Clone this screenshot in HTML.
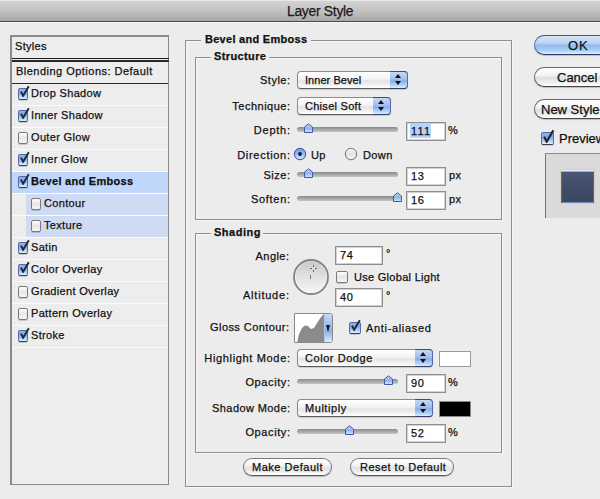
<!DOCTYPE html>
<html><head><meta charset="utf-8">
<style>
*{box-sizing:border-box;margin:0;padding:0}
html,body{width:600px;height:499px;overflow:hidden;background:#ececec;font-family:"Liberation Sans",sans-serif;color:#111}
.a{position:absolute}
.t{position:absolute;font-size:11px;line-height:14px;white-space:nowrap;color:#111;-webkit-text-stroke:0.25px #111}
.r{text-align:right}
#title{position:absolute;left:0;top:0;width:600px;height:22px;background:linear-gradient(#e6e6e6 0,#e6e6e6 1px,#d3d3d3 1px,#c2c2c2 50%,#a8a8a8);border-bottom:1px solid #4a4a4a;box-shadow:0 1px 0 #f8f8f8}
#title span{position:absolute;left:287px;top:4px;font-size:13.8px;line-height:16px;color:#1a1a1a;letter-spacing:-.25px;-webkit-text-stroke:0.25px #1a1a1a}
.box{position:absolute;border:1px solid #8e8e8e;box-shadow:1px 1px 0 #f6f6f6, inset 1px 1px 0 #f6f6f6}
.gbg{position:absolute;height:4px;background:#ececec}
#list{position:absolute;left:10px;top:35px;width:159px;height:450px;background:#ededed;border-left:2px solid #8a8a8a;border-top:2px solid #8a8a8a;border-right:1px solid #8a8a8a;border-bottom:1px solid #8a8a8a}
.row{position:absolute;left:12px;width:156px;height:22px;border-bottom:1px solid #fbfbfb}
.cb{position:absolute;width:10px;height:12px;border-radius:2px;border:1px solid #7a7a7a;background:linear-gradient(#fdfdfd,#e6e6e6 50%,#f6f6f6);box-shadow:0 1px 0 rgba(0,0,0,.15)}
.cb.on{border-color:#5468b0 #5a6aa8 #3d3d5a;background:linear-gradient(#8fb0e6,#86abe6 40%,#a8cdf6 70%,#d8f2ff)}
.cb.on svg{position:absolute;left:1px;top:-4px}
.pop{position:absolute;height:18px;border:1px solid #8a8a8a;border-bottom-color:#5a5a5a;border-radius:4px;background:linear-gradient(#ffffff,#f3f3f3 45%,#e3e3e3 55%,#f4f4f4 85%,#ffffff);box-shadow:0 1px 1px rgba(0,0,0,.15)}
.pop .blue{position:absolute;right:-1px;top:-1px;width:18px;height:18px;border-radius:0 4px 4px 0;border:1px solid #3848a0;border-left:none;border-right-color:#5868b0;border-bottom-color:#3a3a6a;background:linear-gradient(#c6d8f4,#a3c0ec 45%,#86aee6 55%,#b3d7fa 85%,#d9f2ff)}
.pop .blue:before{content:"";position:absolute;left:5px;top:2px;border-left:3px solid transparent;border-right:3px solid transparent;border-bottom:4px solid #111}
.pop .blue:after{content:"";position:absolute;left:5px;top:9px;border-left:3px solid transparent;border-right:3px solid transparent;border-top:4px solid #111}
.track{position:absolute;height:5px;border-radius:3px;background:linear-gradient(#8a8a8a,#a8a8a8 50%,#c4c4c4)}
.thumb{position:absolute;width:11px;height:12px}
.inp{position:absolute;width:40px;height:19px;background:#fff;border:1px solid #8e8e8e;box-shadow:inset 0 0 0 1px #d2d2d2}
.radio{position:absolute;width:12px;height:12px;border-radius:50%;border:1px solid #7a7a7a;background:linear-gradient(#f8f8f8,#e0e0e0 50%,#f6f6f6)}
.radio.on{border-color:#3a4c9a;background:radial-gradient(circle at 50% 50%,#1a1a2a 0,#1a1a2a 1.6px,rgba(26,26,42,.5) 2.2px,transparent 2.8px),linear-gradient(#a9c3ee,#86aee9 50%,#c0e0ff)}
.btn{position:absolute;height:18px;border-radius:9px;border:1px solid #7a7a7a;border-bottom-color:#555;background:linear-gradient(#ffffff,#f4f4f4 40%,#e2e2e2 55%,#f2f2f2 85%,#ffffff);box-shadow:0 1px 1px rgba(0,0,0,.2)}
.bigbtn{position:absolute;height:20px;border-radius:10px;border:1px solid #6a6a6a;border-bottom-color:#444;background:linear-gradient(#ffffff,#f3f3f3 40%,#dedede 55%,#f2f2f2 85%,#ffffff);box-shadow:0 1px 1px rgba(0,0,0,.2)}
.t13{position:absolute;font-size:13px;line-height:15px;white-space:nowrap;color:#111;-webkit-text-stroke:0.25px #111}
</style></head><body>
<div id="title"><span>Layer Style</span></div>
<div id="list"></div>
<div class="a" style="left:12px;top:58px;width:157px;height:1px;background:#1c1c1c"></div>
<div class="a" style="left:12px;top:60px;width:157px;height:2px;background:#2a2a2a"></div>
<div class="a" style="left:12px;top:83px;width:156px;height:1px;background:#2a2a2a"></div>
<div class="t" style="left:15px;top:39px;letter-spacing:0.3px;">Styles</div>
<div class="t" style="left:16px;top:64px;letter-spacing:0.48px;">Blending Options: Default</div>
<div class="row" style="top:84px;"></div>
<span class="cb on" style="left:18px;top:88px"><svg width="11" height="12" viewBox="0 0 11 12"><path d="M0.9 6.6 L3.1 10.8 L8.8 1.2" fill="none" stroke="#232733" stroke-width="1.9"/></svg></span>
<div class="t" style="left:31px;top:86px;letter-spacing:0.33px;">Drop Shadow</div>
<div class="row" style="top:106px;"></div>
<span class="cb on" style="left:18px;top:110px"><svg width="11" height="12" viewBox="0 0 11 12"><path d="M0.9 6.6 L3.1 10.8 L8.8 1.2" fill="none" stroke="#232733" stroke-width="1.9"/></svg></span>
<div class="t" style="left:31px;top:108px;letter-spacing:0.33px;">Inner Shadow</div>
<div class="row" style="top:128px;"></div>
<span class="cb" style="left:18px;top:132px"></span>
<div class="t" style="left:31px;top:130px;letter-spacing:0.33px;">Outer Glow</div>
<div class="row" style="top:150px;"></div>
<span class="cb on" style="left:18px;top:154px"><svg width="11" height="12" viewBox="0 0 11 12"><path d="M0.9 6.6 L3.1 10.8 L8.8 1.2" fill="none" stroke="#232733" stroke-width="1.9"/></svg></span>
<div class="t" style="left:31px;top:152px;letter-spacing:0.33px;">Inner Glow</div>
<div class="row" style="top:172px;background:#c0d6fa;"></div>
<span class="cb on" style="left:18px;top:176px"><svg width="11" height="12" viewBox="0 0 11 12"><path d="M0.9 6.6 L3.1 10.8 L8.8 1.2" fill="none" stroke="#232733" stroke-width="1.9"/></svg></span>
<div class="t" style="left:31px;top:174px;letter-spacing:0.28px;font-weight:bold">Bevel and Emboss</div>
<div class="row" style="top:194px;background:linear-gradient(90deg,#ededed 14px,#cedbf2 14px);"></div>
<span class="cb" style="left:31px;top:198px"></span>
<div class="t" style="left:44px;top:196px;letter-spacing:0.33px;">Contour</div>
<div class="row" style="top:216px;background:linear-gradient(90deg,#ededed 14px,#cedbf2 14px);"></div>
<span class="cb" style="left:31px;top:220px"></span>
<div class="t" style="left:44px;top:218px;letter-spacing:0.33px;">Texture</div>
<div class="row" style="top:238px;"></div>
<span class="cb on" style="left:18px;top:242px"><svg width="11" height="12" viewBox="0 0 11 12"><path d="M0.9 6.6 L3.1 10.8 L8.8 1.2" fill="none" stroke="#232733" stroke-width="1.9"/></svg></span>
<div class="t" style="left:31px;top:240px;letter-spacing:0.33px;">Satin</div>
<div class="row" style="top:260px;"></div>
<span class="cb on" style="left:18px;top:264px"><svg width="11" height="12" viewBox="0 0 11 12"><path d="M0.9 6.6 L3.1 10.8 L8.8 1.2" fill="none" stroke="#232733" stroke-width="1.9"/></svg></span>
<div class="t" style="left:31px;top:262px;letter-spacing:0.33px;">Color Overlay</div>
<div class="row" style="top:282px;"></div>
<span class="cb" style="left:18px;top:286px"></span>
<div class="t" style="left:31px;top:284px;letter-spacing:0.33px;">Gradient Overlay</div>
<div class="row" style="top:304px;"></div>
<span class="cb" style="left:18px;top:308px"></span>
<div class="t" style="left:31px;top:306px;letter-spacing:0.33px;">Pattern Overlay</div>
<div class="row" style="top:326px;"></div>
<span class="cb on" style="left:18px;top:330px"><svg width="11" height="12" viewBox="0 0 11 12"><path d="M0.9 6.6 L3.1 10.8 L8.8 1.2" fill="none" stroke="#232733" stroke-width="1.9"/></svg></span>
<div class="t" style="left:31px;top:328px;letter-spacing:0.33px;">Stroke</div>
<div class="box" style="left:185px;top:40px;width:327px;height:447px"></div>
<div class="gbg" style="left:201px;top:38px;width:110px;height:6px"></div>
<div class="t" style="left:205px;top:32px;letter-spacing:0.28px;font-weight:bold">Bevel and Emboss</div>
<div class="box" style="left:195px;top:57px;width:307px;height:163px"></div>
<div class="gbg" style="left:211px;top:55px;width:58px;height:6px"></div>
<div class="t" style="left:214px;top:49px;letter-spacing:0.38px;font-weight:bold">Structure</div>
<div class="box" style="left:195px;top:233px;width:307px;height:220px"></div>
<div class="gbg" style="left:211px;top:231px;width:52px;height:6px"></div>
<div class="t" style="left:214px;top:225px;letter-spacing:0.5px;font-weight:bold">Shading</div>
<svg width="0" height="0" style="position:absolute"><defs><linearGradient id="tg" x1="0" y1="0" x2="0" y2="1"><stop offset="0" stop-color="#c9dcf6"/><stop offset=".5" stop-color="#8fb3ea"/><stop offset="1" stop-color="#cfeaff"/></linearGradient></defs></svg>
<div class="t r" style="left:139px;width:151.50px;top:73px;letter-spacing:0.5px;">Style:</div>
<div class="pop" style="left:297px;top:71px;width:111px"><div class="blue" style="width:18px"></div></div>
<div class="t" style="left:305px;top:73px;letter-spacing:0.05px;">Inner Bevel</div>
<div class="t r" style="left:139px;width:151.50px;top:99px;letter-spacing:0.5px;">Technique:</div>
<div class="pop" style="left:297px;top:97px;width:94px"><div class="blue" style="width:18px"></div></div>
<div class="t" style="left:305px;top:99px;letter-spacing:0.28px;">Chisel Soft</div>
<div class="t r" style="left:139px;width:151.75px;top:123px;letter-spacing:0.75px;">Depth:</div>
<div class="track" style="left:297px;top:127px;width:101px"></div>
<svg class="thumb" style="left:303px;top:122px" width="11" height="12" viewBox="0 0 11 12"><path d="M1.5 5 L5.5 1.8 L9.5 5 L9.5 10.5 L1.5 10.5 Z" fill="url(#tg)" stroke="#4058a8" stroke-width="1"/></svg>
<div class="inp" style="left:406px;top:122px;width:40px"></div>
<div class="a" style="left:410px;top:124px;width:21px;height:14px;background:#b4d3fd"></div>
<div class="t" style="left:411px;top:124px;letter-spacing:1.2px;">111</div>
<div class="t" style="left:448px;top:123px;letter-spacing:0px;">%</div>
<div class="t r" style="left:139px;width:151.70px;top:148px;letter-spacing:0.7px;">Direction:</div>
<svg class="a" style="left:293px;top:147px" width="14" height="14" viewBox="0 0 14 14"><defs><linearGradient id="rg1" x1="0" y1="0" x2="0" y2="1"><stop offset="0" stop-color="#6f9be0"/><stop offset=".45" stop-color="#8fb5ec"/><stop offset=".55" stop-color="#9ec2f2"/><stop offset="1" stop-color="#d6f0ff"/></linearGradient></defs><circle cx="7" cy="7.3" r="6.2" fill="#000" fill-opacity=".12"/><circle cx="7" cy="7" r="5.7" fill="url(#rg1)" stroke="#3d5aa6" stroke-width="1"/><circle cx="7" cy="7" r="1.9" fill="#15192a"/></svg>
<div class="t" style="left:311px;top:148px;letter-spacing:0.4px;">Up</div>
<svg class="a" style="left:344px;top:147px" width="14" height="14" viewBox="0 0 14 14"><defs><linearGradient id="rg0" x1="0" y1="0" x2="0" y2="1"><stop offset="0" stop-color="#f6f6f6"/><stop offset=".5" stop-color="#e2e2e2"/><stop offset="1" stop-color="#fafafa"/></linearGradient></defs><circle cx="7" cy="7.3" r="6.2" fill="#000" fill-opacity=".12"/><circle cx="7" cy="7" r="5.7" fill="url(#rg0)" stroke="#7c7c7c" stroke-width="1"/></svg>
<div class="t" style="left:363px;top:148px;letter-spacing:0.4px;">Down</div>
<div class="t r" style="left:139px;width:151.50px;top:168px;letter-spacing:0.5px;">Size:</div>
<div class="track" style="left:297px;top:172px;width:101px"></div>
<svg class="thumb" style="left:303px;top:167px" width="11" height="12" viewBox="0 0 11 12"><path d="M1.5 5 L5.5 1.8 L9.5 5 L9.5 10.5 L1.5 10.5 Z" fill="url(#tg)" stroke="#4058a8" stroke-width="1"/></svg>
<div class="inp" style="left:406px;top:167px;width:40px"></div>
<div class="t" style="left:411px;top:169px;letter-spacing:0.6px;">13</div>
<div class="t" style="left:449px;top:168px;letter-spacing:0.4px;">px</div>
<div class="t r" style="left:139px;width:151.68px;top:192px;letter-spacing:0.68px;">Soften:</div>
<div class="track" style="left:297px;top:196px;width:101px"></div>
<svg class="thumb" style="left:392px;top:191px" width="11" height="12" viewBox="0 0 11 12"><path d="M1.5 5 L5.5 1.8 L9.5 5 L9.5 10.5 L1.5 10.5 Z" fill="url(#tg)" stroke="#4058a8" stroke-width="1"/></svg>
<div class="inp" style="left:406px;top:191px;width:40px"></div>
<div class="t" style="left:411px;top:193px;letter-spacing:0.6px;">16</div>
<div class="t" style="left:449px;top:192px;letter-spacing:0.4px;">px</div>
<div class="t r" style="left:138px;width:151.44px;top:249px;letter-spacing:0.44px;">Angle:</div>
<div class="inp" style="left:335px;top:246px;width:48px"></div>
<div class="t" style="left:340px;top:248px;letter-spacing:0.6px;">74</div>
<div class="t" style="left:386px;top:246px;letter-spacing:0px;">°</div>
<svg class="a" style="left:292px;top:258px" width="38" height="38" viewBox="0 0 38 38"><defs><linearGradient id="dg" x1="0" y1="0" x2="0" y2="1"><stop offset="0" stop-color="#c6c6c6"/><stop offset=".5" stop-color="#e2e2e2"/><stop offset="1" stop-color="#f7f7f7"/></linearGradient></defs><circle cx="19" cy="19" r="17" fill="url(#dg)" stroke="#858585" stroke-width="1.8"/><circle cx="19" cy="19" r="15.6" fill="none" stroke="#ffffff" stroke-opacity=".35" stroke-width="1"/><rect x="21" y="7" width="1" height="2" fill="#6a6a6a"/><rect x="21" y="12" width="1" height="2" fill="#6a6a6a"/><rect x="18" y="10" width="2" height="1" fill="#6a6a6a"/><rect x="23" y="10" width="2" height="1" fill="#6a6a6a"/><rect x="18" y="17" width="1" height="4" fill="#7a7a7a"/><rect x="21" y="10" width="1" height="1" fill="#fff"/></svg>
<span class="cb" style="left:336px;top:271px;width:12px;height:12px"></span>
<div class="t" style="left:354px;top:270px;letter-spacing:0.29px;">Use Global Light</div>
<div class="t r" style="left:138px;width:151.78px;top:288px;letter-spacing:0.78px;">Altitude:</div>
<div class="inp" style="left:335px;top:288px;width:48px"></div>
<div class="t" style="left:340px;top:290px;letter-spacing:0.6px;">40</div>
<div class="t" style="left:386px;top:288px;letter-spacing:0px;">°</div>
<div class="t r" style="left:138px;width:151.43px;top:320px;letter-spacing:0.43px;">Gloss Contour:</div>
<div class="a" style="left:294px;top:313px;width:39px;height:30px;border:1px solid #8a8a8a;border-radius:0 3px 3px 0;background:#fff;overflow:hidden">
  <svg class="a" style="left:0;top:0" width="30" height="29" viewBox="0 0 30 29"><path d="M2 29 L4 20 L7 14 L10 11.5 L13 12 L16 15 L19 14 L22 9 L26 3 L29 0 L29 29 Z" fill="#8b8b8b"/></svg>
  <div class="a" style="left:29px;top:0;width:9px;height:28px;background:linear-gradient(#c6d8f4,#9dbcec 45%,#86aee6 60%,#d9f2ff);border-left:1px solid #b0c4e8"></div>
  <div class="a" style="left:31px;top:11px;border-left:2px solid transparent;border-right:2px solid transparent;border-top:7px solid #111"></div>
</div>
<span class="cb on" style="left:349px;top:322px;width:12px;height:12px"><svg width="11" height="12" viewBox="0 0 11 12"><path d="M0.9 6.6 L3.1 10.8 L8.8 1.2" fill="none" stroke="#232733" stroke-width="1.9"/></svg></span>
<div class="t" style="left:366px;top:321px;letter-spacing:0.67px;">Anti-aliased</div>
<div class="t r" style="left:139px;width:151.66px;top:351px;letter-spacing:0.66px;">Highlight Mode:</div>
<div class="pop" style="left:297px;top:349px;width:136px"><div class="blue" style="width:18px"></div></div>
<div class="t" style="left:305px;top:351px;letter-spacing:0.55px;">Color Dodge</div>
<div class="a" style="left:439px;top:351px;width:32px;height:16px;background:#fff;border:1px solid #9a9a9a"></div>
<div class="t r" style="left:139px;width:151.60px;top:375px;letter-spacing:0.6px;">Opacity:</div>
<div class="track" style="left:297px;top:379px;width:101px"></div>
<svg class="thumb" style="left:383px;top:374px" width="11" height="12" viewBox="0 0 11 12"><path d="M1.5 5 L5.5 1.8 L9.5 5 L9.5 10.5 L1.5 10.5 Z" fill="url(#tg)" stroke="#4058a8" stroke-width="1"/></svg>
<div class="inp" style="left:406px;top:374px;width:40px"></div>
<div class="t" style="left:411px;top:376px;letter-spacing:0.6px;">90</div>
<div class="t" style="left:448px;top:375px;letter-spacing:0px;">%</div>
<div class="t r" style="left:139px;width:151.41px;top:401px;letter-spacing:0.41px;">Shadow Mode:</div>
<div class="pop" style="left:297px;top:399px;width:136px"><div class="blue" style="width:18px"></div></div>
<div class="t" style="left:305px;top:401px;letter-spacing:0.55px;">Multiply</div>
<div class="a" style="left:439px;top:401px;width:32px;height:16px;background:#000;border:1px solid #8a8a8a"></div>
<div class="t r" style="left:139px;width:151.60px;top:425px;letter-spacing:0.6px;">Opacity:</div>
<div class="track" style="left:297px;top:429px;width:101px"></div>
<svg class="thumb" style="left:344px;top:424px" width="11" height="12" viewBox="0 0 11 12"><path d="M1.5 5 L5.5 1.8 L9.5 5 L9.5 10.5 L1.5 10.5 Z" fill="url(#tg)" stroke="#4058a8" stroke-width="1"/></svg>
<div class="inp" style="left:406px;top:424px;width:40px"></div>
<div class="t" style="left:411px;top:426px;letter-spacing:0.6px;">52</div>
<div class="t" style="left:448px;top:425px;letter-spacing:0px;">%</div>
<div class="btn" style="left:243px;top:458px;width:89px"></div>
<div class="t" style="left:252px;top:460px;letter-spacing:0.53px;">Make Default</div>
<div class="btn" style="left:350px;top:458px;width:104px"></div>
<div class="t" style="left:360px;top:460px;letter-spacing:0.47px;">Reset to Default</div>
<div class="bigbtn" style="left:534px;top:35px;width:100px;border-color:#4050a8 #5a6ab0 #34346a;background:linear-gradient(#d4e3f7,#bcd2f3 40%,#93b9ee 52%,#a9d0f9 80%,#d6f3ff)"></div>
<div class="t13" style="left:568px;top:38px;letter-spacing:1px">OK</div>
<div class="bigbtn" style="left:534px;top:67px;width:100px"></div>
<div class="t13" style="left:557px;top:70px">Cancel</div>
<div class="bigbtn" style="left:534px;top:99px;width:100px"></div>
<div class="t13" style="left:541px;top:102px">New Style...</div>
<span class="cb on" style="left:541px;top:132px;width:13px;height:13px"><svg width="13" height="14" viewBox="0 0 11 12"><path d="M0.9 6.6 L3.1 10.8 L8.8 1.2" fill="none" stroke="#232733" stroke-width="1.9"/></svg></span>
<div class="t13" style="left:559px;top:131px">Preview</div>
<div class="a" style="left:545px;top:153px;width:70px;height:65px;background:#dadada;border-left:1px solid #707070;border-top:1px solid #8a8a8a"></div>
<div class="a" style="left:561px;top:170px;width:33px;height:33px;background:linear-gradient(#4b5878,#404c68 50%,#3b4662);box-shadow:inset 0 1px 0 #e4ecff,inset 0 2px 0 #9aabd0,inset 1px 0 0 #5b6890,inset -1px 0 0 #55628a,inset 0 -1px 0 #7a8cb8,0 0 0 1px rgba(205,190,150,.4)"></div>
</body></html>
